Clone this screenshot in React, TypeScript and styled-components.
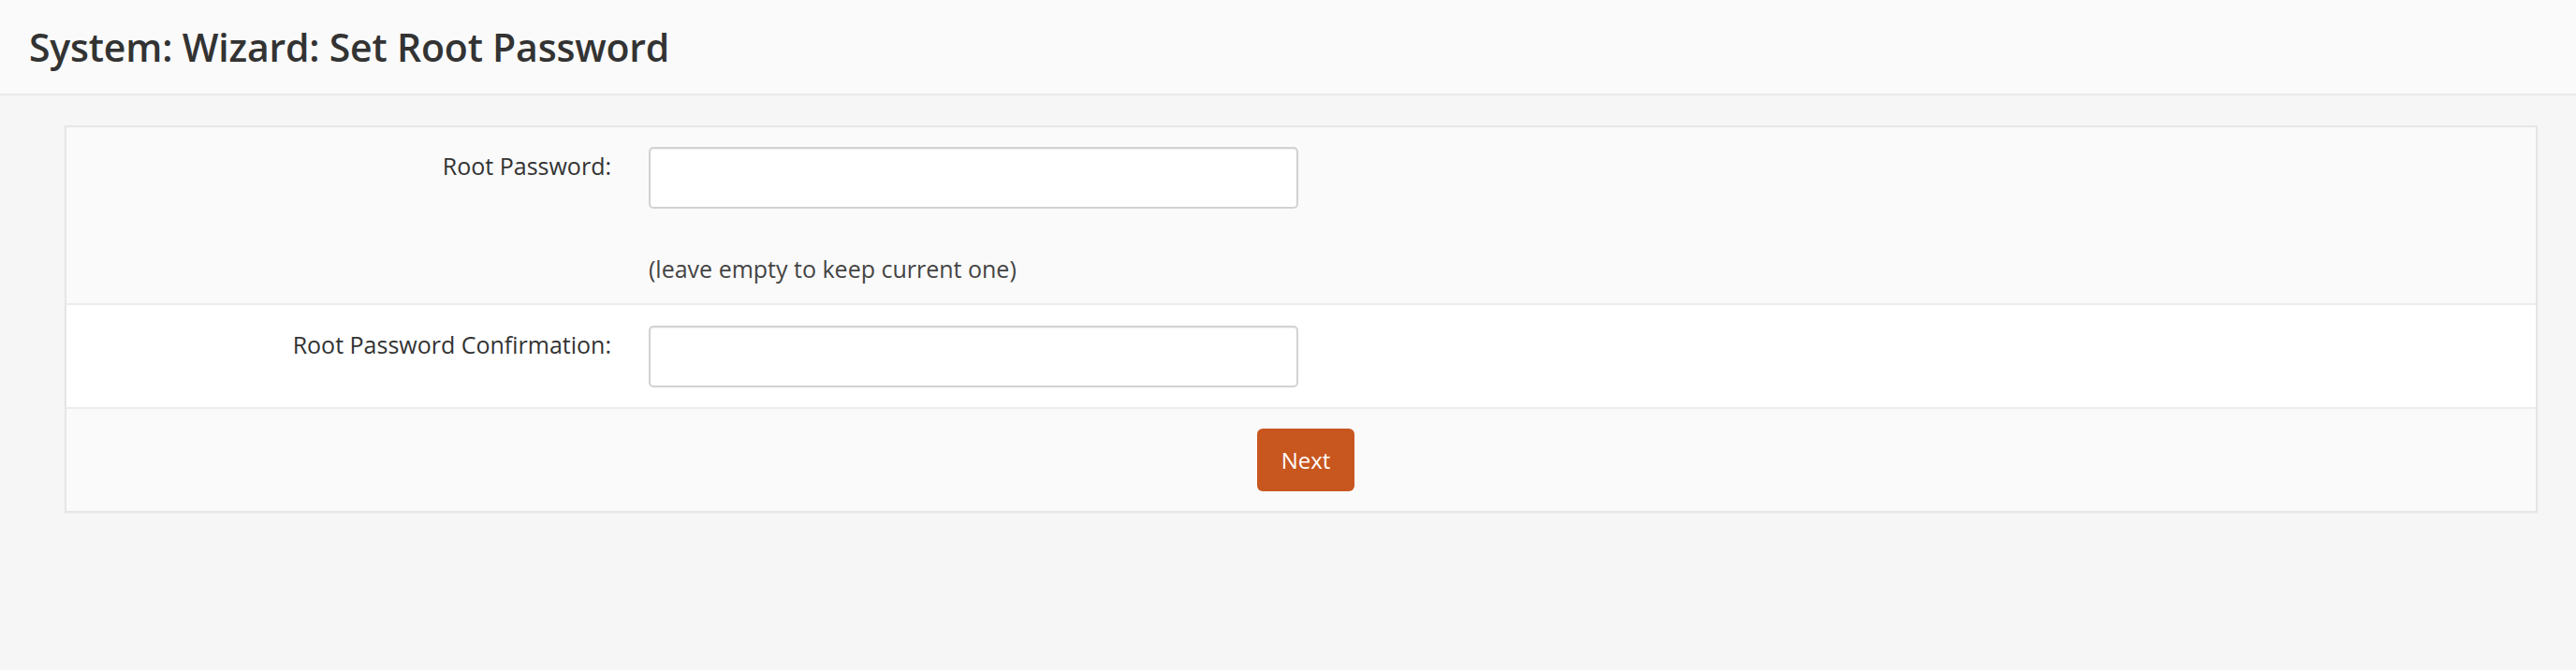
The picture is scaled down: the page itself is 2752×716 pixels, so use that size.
import styled, { createGlobalStyle } from 'styled-components';

const GlobalStyle = createGlobalStyle`
  html, body {
    margin: 0;
    padding: 0;
    background: #f6f6f6;
    font-family: "Open Sans", "Liberation Sans", sans-serif;
    color: #333;
  }
`

const Page = styled.div`
  min-height: 716px;
  background: #f6f6f6;
`
const Header = styled.header`
  height: 100px;
  display: flex;
  align-items: center;
  padding-left: 31px;
  background: #fafafa;
  border-bottom: 2px solid #e9e9e9;
`
const Title = styled.h1`
  margin: 0;
  font-size: 41px;
  font-weight: 600;
  color: #333;
  letter-spacing: -0.2px;
`
const Content = styled.main`
  padding: 32px 41px 0 69px;
`
const Card = styled.section`
  border: 2px solid #e6e6e6;
  background: #fafafa;
  box-shadow: 0 1px 2px rgba(0, 0, 0, 0.03);
`
const Row = styled.div<{ $white?: boolean }>`
  display: grid;
  grid-template-columns: 622px 1fr;
  background: ${p => (p.$white ? '#fff' : '#fafafa')};
  & + & {
    border-top: 2px solid #ececec;
  }
`
const Label = styled.label<{ $top: number }>`
  padding: ${p => p.$top}px 40px 0 0;
  text-align: right;
  font-size: 25px;
  line-height: 34px;
  color: #333;
`
const Field = styled.div<{ $top: number; $bottom: number }>`
  display: flex;
  flex-direction: column;
  padding: ${p => p.$top}px 0 ${p => p.$bottom}px;
`
const Input = styled.input`
  box-sizing: border-box;
  width: 694px;
  height: 66px;
  border: 2px solid #d2d2d2;
  border-radius: 5px;
  background: #fff;
  box-shadow: inset 0 1px 2px rgba(0, 0, 0, 0.06);
  font: inherit;
  font-size: 24px;
  padding: 0 14px;
  outline: none;
`
const Help = styled.div`
  margin-top: 47px;
  font-size: 25px;
  line-height: 34px;
  color: #444;
`
const Actions = styled.div`
  display: flex;
  justify-content: center;
  padding: 21px 0 21px 10px;
  background: #fafafa;
  border-top: 2px solid #ececec;
`
const Button = styled.button`
  width: 104px;
  height: 67px;
  border: none;
  border-radius: 6px;
  background: #c8561f;
  color: #fff;
  font-family: "Open Sans", "Liberation Sans", sans-serif;
  font-size: 24px;
  cursor: pointer;
`

export default function App() {
  return (
    <Page>
      <GlobalStyle />
      <Header>
        <Title>System: Wizard: Set Root Password</Title>
      </Header>
      <Content>
        <Card>
          <Row>
            <Label $top={24}>Root Password:</Label>
            <Field $top={21} $bottom={20}>
              <Input type="password" />
              <Help>(leave empty to keep current one)</Help>
            </Field>
          </Row>
          <Row $white>
            <Label $top={25}>Root Password Confirmation:</Label>
            <Field $top={22} $bottom={21}>
              <Input type="password" />
            </Field>
          </Row>
          <Actions>
            <Button>Next</Button>
          </Actions>
        </Card>
      </Content>
    </Page>
  )
}
